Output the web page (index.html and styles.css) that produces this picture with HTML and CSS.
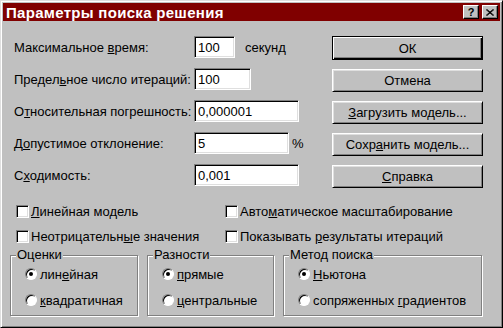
FILE: index.html
```html
<html>
<head>
    <title>Параметры поиска решения</title>
    <link rel="stylesheet" href="styles.css">
</head>
<body>
    <div class="window">
        <div class="titlebar">
            <span class="title">Параметры поиска решения</span>
            <div class="title-btns">
                <span class="tbtn help">?</span>
                <span class="tbtn">
                    <svg width="8" height="7" viewBox="0 0 8 7"><path d="M0 0.5 L7 6.5 M1 0.5 L8 6.5 M7 0.5 L0 6.5 M8 0.5 L1 6.5" stroke="#000" stroke-width="1"/></svg>
                </span>
            </div>
        </div>
        <div class="content">
            <div class="top">
                <div class="fields">
                    <div class="row">
                        <label>Максимальное <u>в</u>ремя:</label>
                        <div class="field w-time">100</div>
                        <span class="unit">секунд</span>
                    </div>
                    <div class="row">
                        <label>Предел<u>ь</u>ное число итераций:</label>
                        <div class="field w-iter">100</div>
                    </div>
                    <div class="row">
                        <label>О<u>т</u>носительная погрешность:</label>
                        <div class="field w-long">0,000001</div>
                    </div>
                    <div class="row">
                        <label>Д<u>о</u>пустимое отклонение:</label>
                        <div class="field w-dev">5</div>
                        <span class="percent">%</span>
                    </div>
                    <div class="row">
                        <label>С<u>х</u>одимость:</label>
                        <div class="field w-long">0,001</div>
                    </div>
                </div>
                <div class="buttons">
                    <div class="btn default">ОК</div>
                    <div class="btn">Отмена</div>
                    <div class="btn"><u>З</u>агрузить модель...</div>
                    <div class="btn">Сохр<u>а</u>нить модель...</div>
                    <div class="btn"><u>С</u>правка</div>
                </div>
            </div>
            <div class="checks">
                <div class="check"><span class="box"></span><span><u>Л</u>инейная модель</span></div>
                <div class="check"><span class="box"></span><span>Авто<u>м</u>атическое масштабирование</span></div>
                <div class="check"><span class="box"></span><span>Неотрицательн<u>ы</u>е значения</span></div>
                <div class="check"><span class="box"></span><span>Показывать <u>р</u>езультаты итераций</span></div>
            </div>
            <div class="groups">
                <fieldset class="group g-est">
                    <legend>Оценки</legend>
                    <div class="opt"><span class="radio on"></span><span>лин<u>е</u>йная</span></div>
                    <div class="opt"><span class="radio"></span><span><u>к</u>вадратичная</span></div>
                </fieldset>
                <fieldset class="group g-diff">
                    <legend>Разности</legend>
                    <div class="opt"><span class="radio on"></span><span><u>п</u>рямые</span></div>
                    <div class="opt"><span class="radio"></span><span><u>ц</u>ентральные</span></div>
                </fieldset>
                <fieldset class="group g-method">
                    <legend>Метод поиска</legend>
                    <div class="opt"><span class="radio on"></span><span><u>Н</u>ьютона</span></div>
                    <div class="opt"><span class="radio"></span><span>сопряженных <u>г</u>радиентов</span></div>
                </fieldset>
            </div>
        </div>
    </div>
</body>
</html>
```
FILE: styles.css
```css
* {
    box-sizing: border-box;
}
body {
    margin: 0;
    background-color: #c0c0c0;
    font-family: "Liberation Sans", Arial, sans-serif;
    font-size: 13px;
    line-height: 15px;
    color: #000;
}
.window {
    width: 503px;
    height: 328px;
    display: flex;
    flex-direction: column;
    padding: 2px;
    border: 1px solid;
    border-color: #dfdfdf #000 #000 #dfdfdf;
    box-shadow: inset 1px 1px #fff, inset -1px -1px #808080;
}
.titlebar {
    height: 18px;
    display: flex;
    align-items: center;
    justify-content: space-between;
    padding: 0 2px 0 3px;
    background-color: #800000;
}
.title {
    color: #fff;
    font-weight: bold;
    font-size: 15px;
    letter-spacing: 0.3px;
}
.title-btns {
    display: flex;
    gap: 3px;
}
.tbtn {
    width: 16px;
    height: 14px;
    display: flex;
    align-items: center;
    justify-content: center;
    background-color: #c0c0c0;
    border: 1px solid;
    border-color: #fff #000 #000 #fff;
    box-shadow: inset -1px -1px #808080;
    font-weight: bold;
    font-size: 11px;
    line-height: 12px;
}
.content {
    flex: 1;
    display: flex;
    flex-direction: column;
    padding: 15px 17px 0 7px;
}
.top {
    display: flex;
    justify-content: space-between;
}
.fields {
    display: flex;
    flex-direction: column;
    gap: 10px;
    padding-left: 4px;
}
.row {
    display: flex;
    align-items: center;
    height: 22px;
}
.row label {
    width: 180px;
}
.field {
    height: 22px;
    padding: 3px 3px 0;
    background-color: #fff;
    border: 1px solid;
    border-color: #808080 #fff #fff #808080;
    box-shadow: inset 1px 1px #000, inset -1px -1px #dfdfdf;
}
.w-time { width: 41px; }
.w-iter { width: 57px; }
.w-long { width: 105px; }
.w-dev { width: 95px; }
.unit {
    margin-left: 10px;
}
.percent {
    margin-left: 3px;
}
.buttons {
    width: 151px;
    display: flex;
    flex-direction: column;
    gap: 9px;
}
.btn {
    height: 23px;
    display: flex;
    align-items: center;
    justify-content: center;
    border: 1px solid;
    border-color: #fff #000 #000 #fff;
    box-shadow: inset 1px 1px #dfdfdf, inset -1px -1px #808080;
}
.btn.default {
    height: 24px;
    border-color: #000;
    box-shadow: inset 1px 1px #fff, inset -1px -1px #000, inset -2px -2px #808080;
}
.checks {
    display: grid;
    grid-template-columns: 209px 1fr;
    row-gap: 12px;
    margin-top: 17px;
    padding-left: 6px;
}
.check {
    display: flex;
    align-items: center;
    gap: 2px;
    height: 13px;
}
.box {
    width: 13px;
    height: 13px;
    background-color: #fff;
    border: 1px solid;
    border-color: #808080 #fff #fff #808080;
    box-shadow: inset 1px 1px #000, inset -1px -1px #dfdfdf;
}
.groups {
    display: flex;
    gap: 9px;
    margin-top: 5px;
}
.group {
    margin: 0;
    padding: 5px 0 8px 5px;
    border: 1px solid #808080;
    box-shadow: inset 1px 1px #fff, 1px 1px #fff;
    display: flex;
    flex-direction: column;
    gap: 12px;
}
.group legend {
    padding: 0 1px;
    line-height: 14px;
    background-color: #c0c0c0;
}
.g-est { width: 128px; }
.g-diff { width: 127px; }
.g-method { width: 199px; }
.opt {
    display: flex;
    align-items: center;
    gap: 3px;
    height: 14px;
    padding-left: 9px;
}
.radio {
    width: 12px;
    height: 12px;
    display: flex;
    align-items: center;
    justify-content: center;
    border-radius: 50%;
    background-color: #fff;
    border: 1px solid;
    border-color: #808080 #fff #fff #808080;
    box-shadow: inset 1px 1px #000;
}
.radio.on::after {
    content: "";
    width: 4px;
    height: 4px;
    border-radius: 50%;
    background-color: #000;
}
```
